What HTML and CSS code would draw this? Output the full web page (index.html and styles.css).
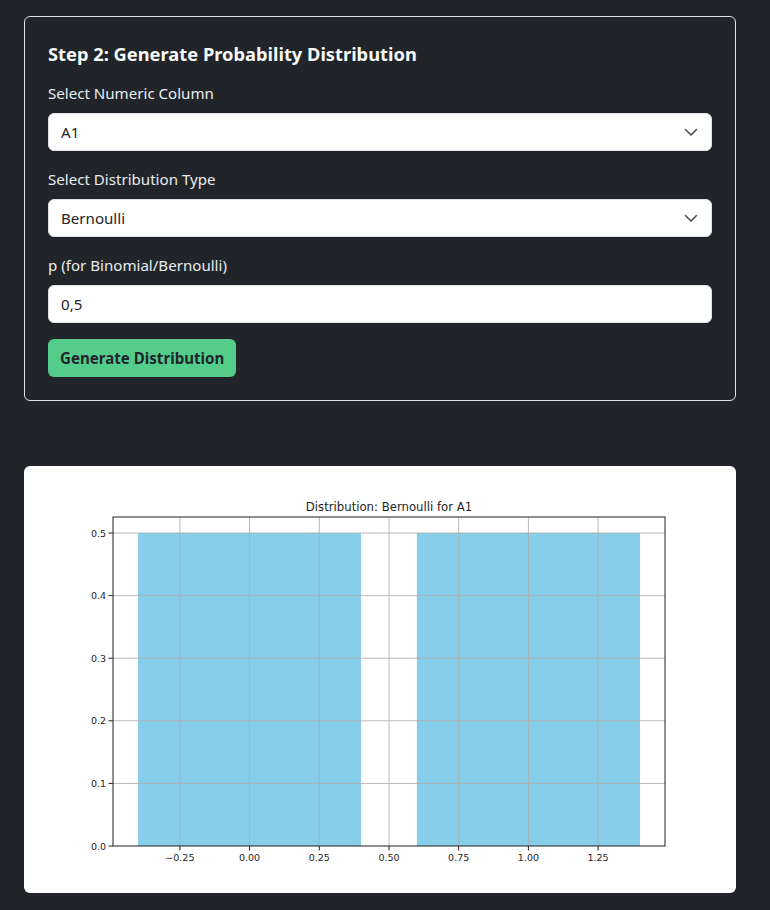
FILE: index.html
```html
<!DOCTYPE html>
<html lang="en">
<head>
<meta charset="utf-8">
<title>Step 2: Generate Probability Distribution</title>
<link rel="stylesheet" href="styles.css">
</head>
<body>
<div class="page">
  <section class="card">
    <h5 class="card-title">Step 2: Generate Probability Distribution</h5>
    <div class="field">
      <label class="form-label">Select Numeric Column</label>
      <div class="select">
        <span>A1</span>
        <svg class="chev" width="16" height="16" viewBox="0 0 16 16"><path d="M2.5 5.5l5.5 5.5 5.5-5.5" fill="none" stroke="#495057" stroke-width="1.6" stroke-linecap="round" stroke-linejoin="round"/></svg>
      </div>
    </div>
    <div class="field">
      <label class="form-label">Select Distribution Type</label>
      <div class="select">
        <span>Bernoulli</span>
        <svg class="chev" width="16" height="16" viewBox="0 0 16 16"><path d="M2.5 5.5l5.5 5.5 5.5-5.5" fill="none" stroke="#495057" stroke-width="1.6" stroke-linecap="round" stroke-linejoin="round"/></svg>
      </div>
    </div>
    <div class="field">
      <label class="form-label">p (for Binomial/Bernoulli)</label>
      <div class="input">0,5</div>
    </div>
    <button class="btn">Generate Distribution</button>
  </section>

  <section class="chart-card">
    <svg class="chart" width="680" height="395" viewBox="0 0 680 395" font-family="'DejaVu Sans', sans-serif">
      <text x="349" y="29" font-size="11.7" text-anchor="middle" fill="#262626">Distribution: Bernoulli for A1</text>
      <rect x="98" y="51" width="223" height="313" fill="#87ceeb"/>
      <rect x="376.9" y="51" width="223.1" height="313" fill="#87ceeb"/>
      <g stroke="#b0b0b0" stroke-width="0.9">
        <line x1="139.9" y1="35" x2="139.9" y2="364"/>
        <line x1="209.6" y1="35" x2="209.6" y2="364"/>
        <line x1="279.3" y1="35" x2="279.3" y2="364"/>
        <line x1="349" y1="35" x2="349" y2="364"/>
        <line x1="418.7" y1="35" x2="418.7" y2="364"/>
        <line x1="488.4" y1="35" x2="488.4" y2="364"/>
        <line x1="558.1" y1="35" x2="558.1" y2="364"/>
        <line x1="73" y1="301.4" x2="625" y2="301.4"/>
        <line x1="73" y1="238.8" x2="625" y2="238.8"/>
        <line x1="73" y1="176.2" x2="625" y2="176.2"/>
        <line x1="73" y1="113.6" x2="625" y2="113.6"/>
        <line x1="73" y1="51" x2="625" y2="51"/>
      </g>
      <rect x="73" y="35" width="552" height="329" fill="none" stroke="#222" stroke-width="1"/>
      <g stroke="#222" stroke-width="1">
        <line x1="68.5" y1="364" x2="73" y2="364"/>
        <line x1="68.5" y1="301.4" x2="73" y2="301.4"/>
        <line x1="68.5" y1="238.8" x2="73" y2="238.8"/>
        <line x1="68.5" y1="176.2" x2="73" y2="176.2"/>
        <line x1="68.5" y1="113.6" x2="73" y2="113.6"/>
        <line x1="68.5" y1="51" x2="73" y2="51"/>
        <line x1="139.9" y1="364" x2="139.9" y2="368.5"/>
        <line x1="209.6" y1="364" x2="209.6" y2="368.5"/>
        <line x1="279.3" y1="364" x2="279.3" y2="368.5"/>
        <line x1="349" y1="364" x2="349" y2="368.5"/>
        <line x1="418.7" y1="364" x2="418.7" y2="368.5"/>
        <line x1="488.4" y1="364" x2="488.4" y2="368.5"/>
        <line x1="558.1" y1="364" x2="558.1" y2="368.5"/>
      </g>
      <g font-size="9.5" fill="#262626" text-anchor="end">
        <text x="66" y="367.5">0.0</text>
        <text x="66" y="304.9">0.1</text>
        <text x="66" y="242.3">0.2</text>
        <text x="66" y="179.7">0.3</text>
        <text x="66" y="117.1">0.4</text>
        <text x="66" y="54.5">0.5</text>
      </g>
      <g font-size="9.5" fill="#262626" text-anchor="middle">
        <text x="139.9" y="379">−0.25</text>
        <text x="209.6" y="379">0.00</text>
        <text x="279.3" y="379">0.25</text>
        <text x="349" y="379">0.50</text>
        <text x="418.7" y="379">0.75</text>
        <text x="488.4" y="379">1.00</text>
        <text x="558.1" y="379">1.25</text>
      </g>
    </svg>
  </section>
</div>
</body>
</html>
```
FILE: styles.css
```css
* { box-sizing: border-box; }
html, body { margin: 0; padding: 0; }
body {
  background: #212529;
  color: #dee2e6;
  font-family: "Noto Sans", "Open Sans", sans-serif;
  font-size: 15.1px;
  line-height: 24px;
}
.page {
  width: 712px;
  margin-left: 24px;
  padding-top: 16px;
}
.card {
  border: 1px solid #dee2e6;
  border-radius: 6px;
  padding: 23px;
  background: #212529;
}
.card-title {
  margin: 0 0 15px 0;
  padding-top: 2px;
  font-size: 18.3px;
  font-weight: 700;
  line-height: 24px;
  color: #f8f9fa;
}
.field { margin-bottom: 16px; }
.form-label {
  display: block;
  margin-bottom: 8px;
  color: #e9ecef;
}
.select, .input {
  height: 38px;
  background: #fff;
  border: 1px solid #dee2e6;
  border-radius: 6px;
  padding: 0 12px;
  color: #212529;
  display: flex;
  align-items: center;
  justify-content: space-between;
}
.chev { display: block; }
.btn {
  height: 38px;
  padding: 0 12px;
  border: 0;
  border-radius: 6px;
  background: #54cd8c;
  color: #212529;
  font-family: inherit;
  font-size: 15.1px;
  font-weight: 700;
  line-height: 24px;
}
.chart-card {
  margin-top: 65px;
  background: #fff;
  border-radius: 6px;
  padding: 16px;
  height: 427px;
}
.chart { display: block; }
```
